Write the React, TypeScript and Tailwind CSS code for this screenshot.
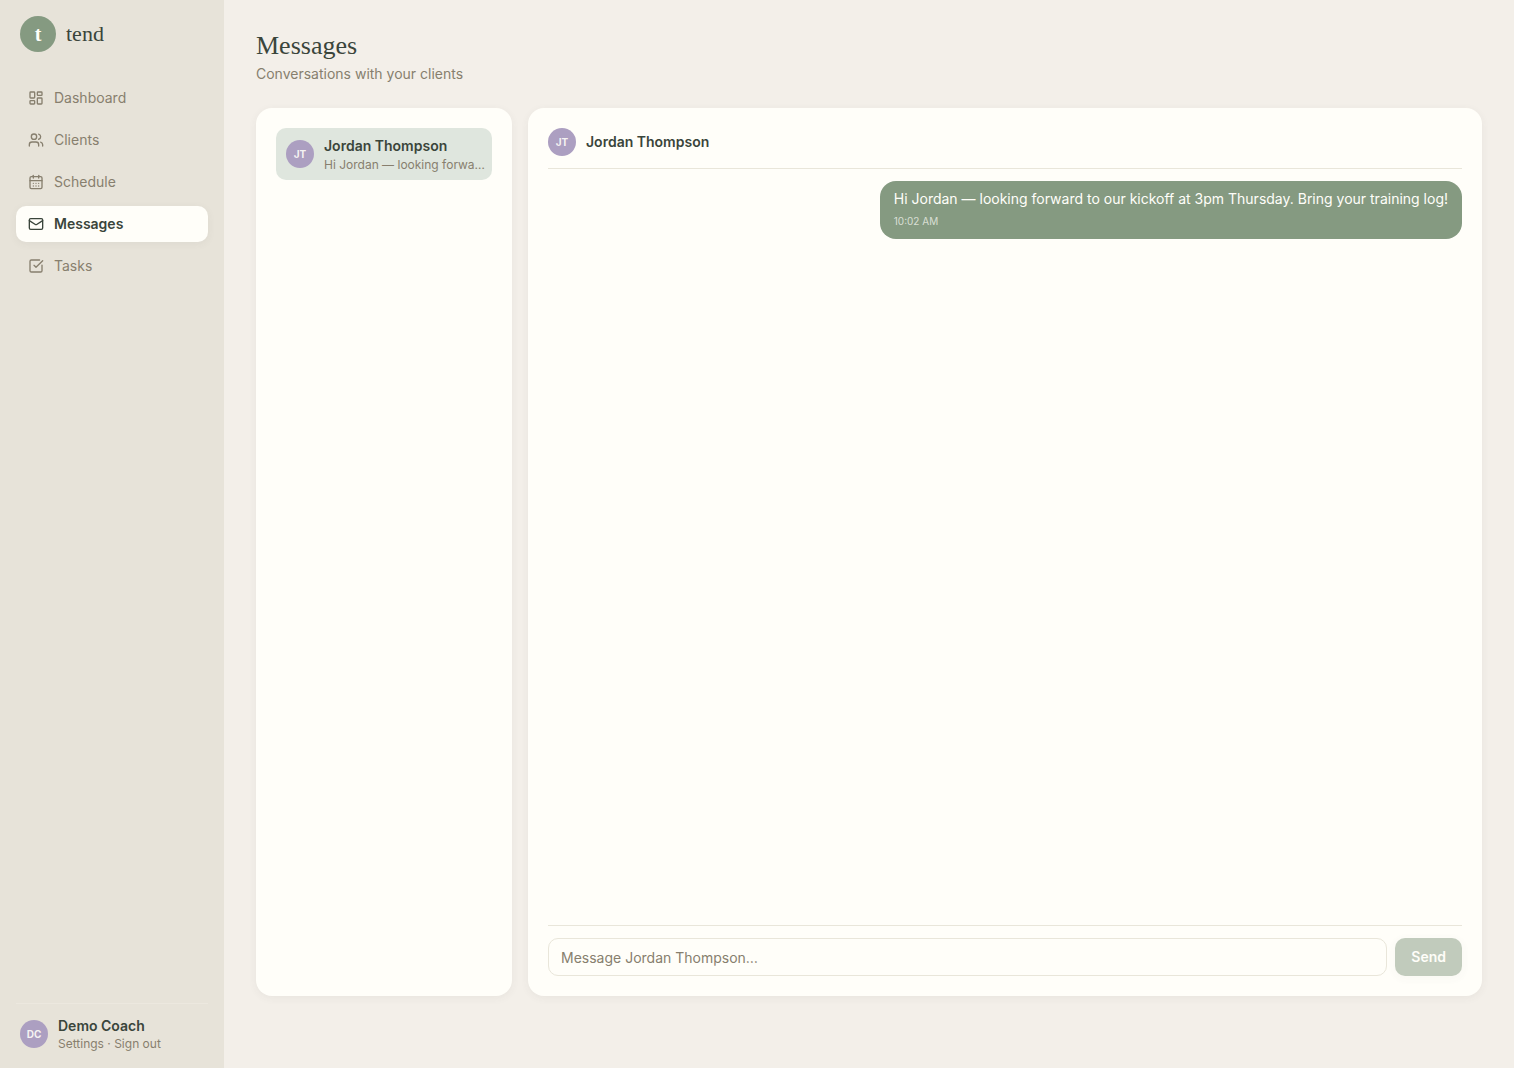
import { useState } from 'react';
import type { FormEvent } from 'react';
import { CalendarDays, LayoutDashboard, Mail, SquareCheckBig, Users } from 'lucide-react';
import clsx from 'clsx';

const navItems = [
  { label: 'Dashboard', icon: LayoutDashboard },
  { label: 'Clients', icon: Users },
  { label: 'Schedule', icon: CalendarDays },
  { label: 'Messages', icon: Mail },
  { label: 'Tasks', icon: SquareCheckBig },
];

interface Message {
  id: number;
  text: string;
  time: string;
}

const initialMessages: Message[] = [
  {
    id: 1,
    text: 'Hi Jordan — looking forward to our kickoff at 3pm Thursday. Bring your training log!',
    time: '10:02 AM',
  },
];

const Avatar = ({ initials }: { initials: string }) => (
  <span
    className="flex size-7 shrink-0 items-center justify-center rounded-full bg-[#ac9fc1] text-[10px] font-bold text-[#fffef9]/90"
    aria-hidden="true"
  >
    {initials}
  </span>
);

const Sidebar = () => (
  <aside className="flex w-56 shrink-0 flex-col bg-[#e7e3d9] p-4">
    {/* Brand */}
    <a href="#dashboard" className="flex items-center gap-2.5 px-1">
      <span className="flex size-9 items-center justify-center rounded-full bg-[#859a81] font-['Liberation_Serif',serif] text-xl font-bold text-[#fffef9]">
        t
      </span>
      <span className="font-['Liberation_Serif',serif] text-[22px] leading-7">tend</span>
    </a>

    <nav className="mt-7 flex flex-col gap-1.5" aria-label="Main">
      {navItems.map(({ label, icon: Icon }) => {
        const active = label === 'Messages';
        return (
          <a
            key={label}
            href={`#${label.toLowerCase()}`}
            aria-current={active ? 'page' : undefined}
            className={clsx(
              'flex h-9 items-center gap-2.5 rounded-[10px] px-3 text-sm',
              active
                ? 'bg-[#fffef9] font-semibold shadow-[0_2px_8px_rgba(61,70,60,0.06)]'
                : 'text-[#877f6e] hover:bg-[#fffef9]/50',
            )}
          >
            <Icon className="size-4" strokeWidth={2} aria-hidden="true" />
            {label}
          </a>
        );
      })}
    </nav>

    {/* Account */}
    <div className="mt-auto flex items-center gap-2.5 border-t border-[#ece8df] px-1 pt-3">
      <Avatar initials="DC" />
      <div>
        <p className="text-sm leading-5 font-semibold">Demo Coach</p>
        <p className="text-xs leading-4 text-[#877f6e]">
          <a href="#settings">Settings</a> · <a href="#sign-out">Sign out</a>
        </p>
      </div>
    </div>
  </aside>
);

export default function App() {
  const [messages, setMessages] = useState(initialMessages);
  const [draft, setDraft] = useState('');

  const handleSubmit = (e: FormEvent) => {
    e.preventDefault();
    const text = draft.trim();
    if (!text) return;
    const time = new Date().toLocaleTimeString('en-US', { hour: '2-digit', minute: '2-digit' });
    setMessages([...messages, { id: messages.length + 1, text, time }]);
    setDraft('');
  };

  return (
    <div className="flex min-h-screen bg-[#f3efe9] font-['Inter',sans-serif] text-[#3a453b]">
      <Sidebar />

      <main className="flex min-w-0 flex-1 flex-col px-8 pt-7 pb-18">
        <h1 className="font-['Liberation_Serif',serif] text-[26px] leading-9">Messages</h1>
        <p className="text-sm leading-5 text-[#877f6e]">Conversations with your clients</p>

        <div className="mt-6 flex flex-1 gap-4">
          {/* Conversation list */}
          <section
            className="w-64 shrink-0 rounded-2xl bg-[#fffef9] p-5 shadow-[0_2px_8px_rgba(61,70,60,0.06)]"
            aria-label="Conversations"
          >
            <button
              type="button"
              className="flex w-full items-center gap-2.5 rounded-[10px] bg-[#dfe6de] py-[7px] pr-1.5 pl-2.5 text-left"
            >
              <Avatar initials="JT" />
              <span className="min-w-0 flex-1">
                <span className="block text-sm leading-[22px] font-semibold">Jordan Thompson</span>
                <span className="block truncate text-xs leading-4 text-[#877f6e]">
                  {messages[messages.length - 1].text}
                </span>
              </span>
            </button>
          </section>

          {/* Open thread */}
          <section
            className="flex min-w-0 flex-1 flex-col rounded-2xl bg-[#fffef9] p-5 shadow-[0_2px_8px_rgba(61,70,60,0.06)]"
            aria-label="Conversation with Jordan Thompson"
          >
            <header className="flex items-center gap-2.5 border-b border-[#e9e6da] pb-3">
              <Avatar initials="JT" />
              <h2 className="text-sm font-semibold">Jordan Thompson</h2>
            </header>

            <div className="flex flex-1 flex-col items-end gap-2 py-3">
              {messages.map((message) => (
                <div key={message.id} className="rounded-2xl bg-[#859a81] px-3.5 pt-2 pb-2.5 text-[#fffef9]">
                  <p className="text-sm leading-5">{message.text}</p>
                  <p className="mt-1 text-[10px] leading-4 text-[#fffef9]/70">{message.time}</p>
                </div>
              ))}
            </div>

            <form onSubmit={handleSubmit} className="flex gap-2 border-t border-[#e9e6da] pt-3">
              <input
                type="text"
                value={draft}
                onChange={(e) => setDraft(e.target.value)}
                placeholder="Message Jordan Thompson…"
                aria-label="Message Jordan Thompson"
                className="h-[38px] min-w-0 flex-1 rounded-[10px] border border-[#e9e6da] px-3 text-sm outline-none placeholder:text-[#877f6e] focus:border-[#859a81]"
              />
              <button
                type="submit"
                disabled={!draft.trim()}
                className="rounded-[10px] bg-[#859a81] px-4 text-sm font-semibold text-[#fffef9] shadow-[0_2px_8px_rgba(61,70,60,0.06)] disabled:opacity-50"
              >
                Send
              </button>
            </form>
          </section>
        </div>
      </main>
    </div>
  );
}
